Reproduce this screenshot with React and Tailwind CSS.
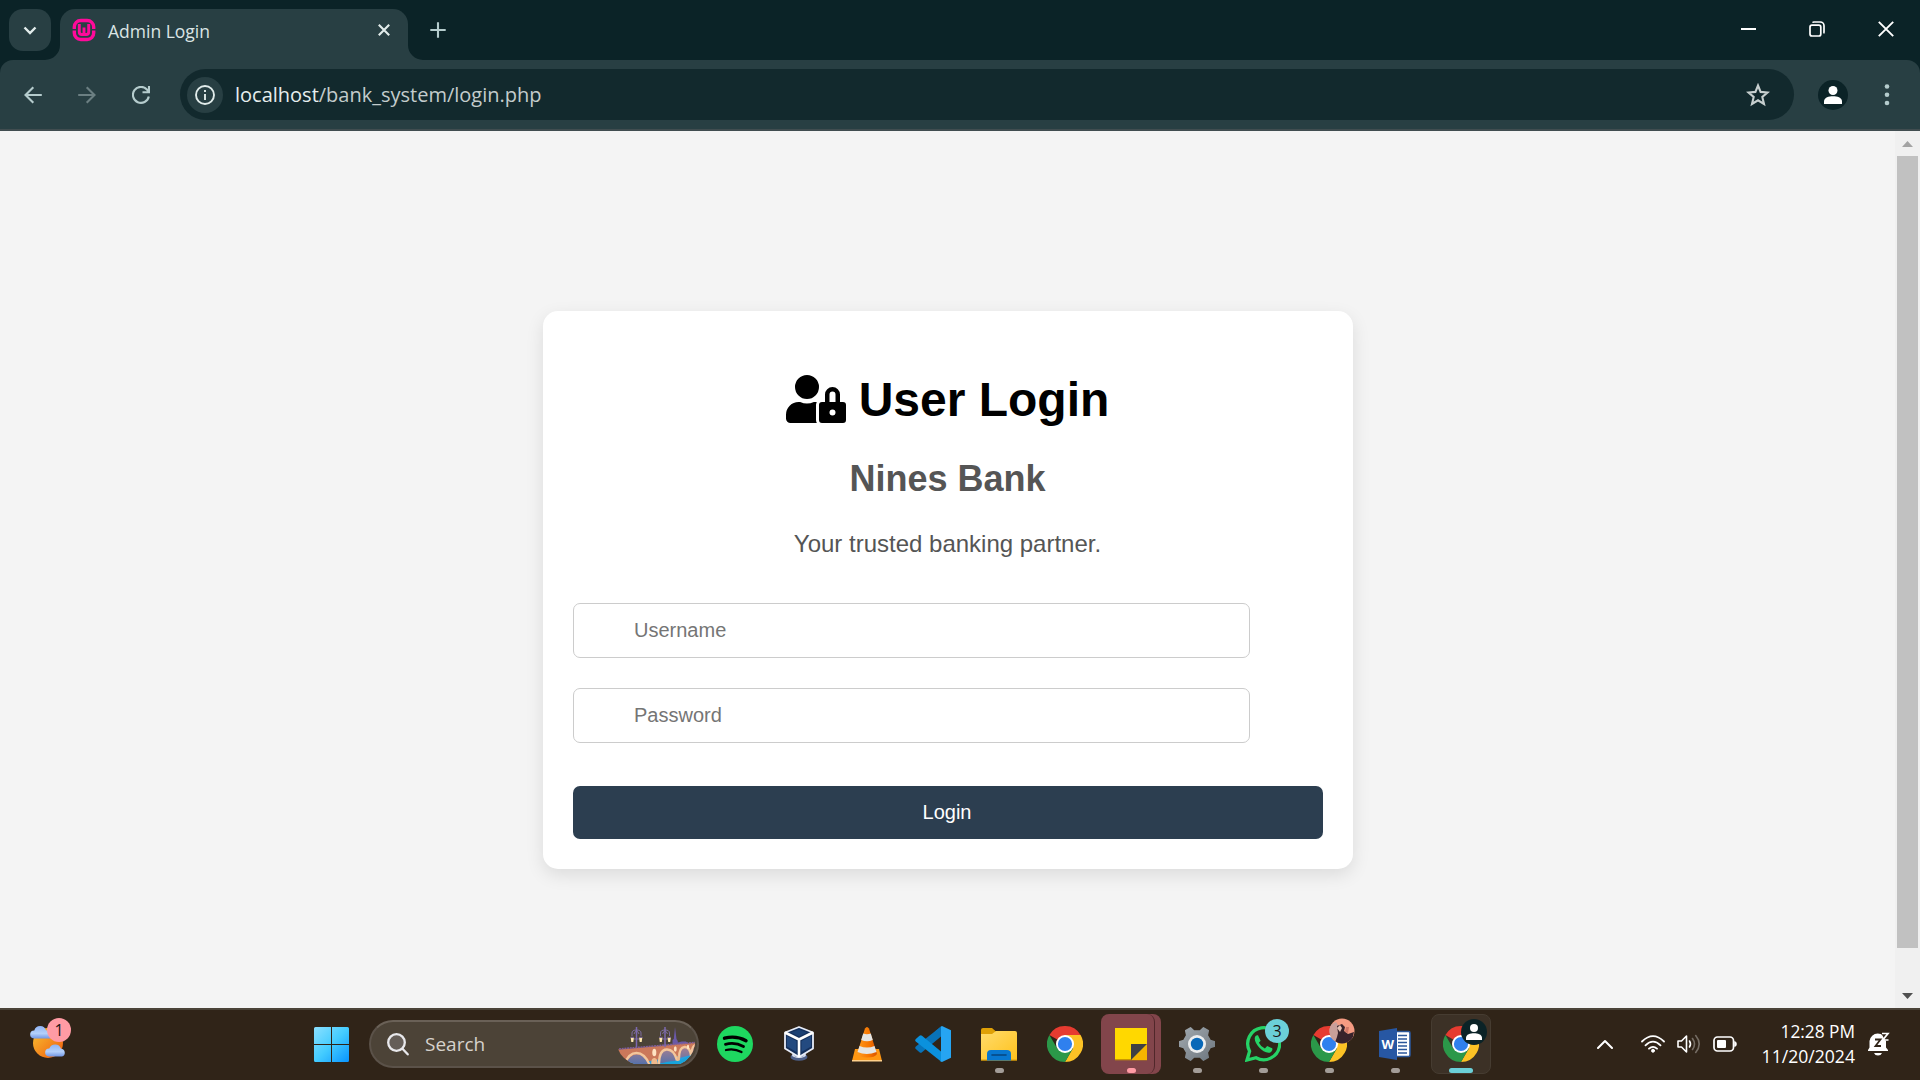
import React from "react";
import { FaUserLock } from "react-icons/fa";

const UI = "font-['Open_Sans','Noto_Sans',sans-serif]";

function Chevron({ up, className }) {
  return (
    <svg viewBox="0 0 16 10" className={className} fill="none" stroke="currentColor" strokeWidth="2" strokeLinecap="round" strokeLinejoin="round">
      <path d={up ? "M1 9 8 2l7 7" : "M2 2l6 6 6-6"} />
    </svg>
  );
}

function WampIcon() {
  return (
    <svg viewBox="0 0 24 24" className="h-6 w-6 shrink-0" fill="none" stroke="#ff0a9a">
      <path d="M2.300 11V9a6.500 6.500 0 0 1 6.500-6.500h6.400A6.500 6.500 0 0 1 21.700 9v2M2.300 12.600v2.400a6.500 6.500 0 0 0 6.500 6.500h6.400a6.500 6.500 0 0 0 6.500-6.500v-2.400" strokeWidth="3.400" />
      <path d="M7.300 6v8q0 2.500 2.500 2.500h4.400q2.500 0 2.500-2.500V6M12 9.500v6.500" strokeWidth="2.900" />
    </svg>
  );
}

function TabStrip() {
  return (
    <div className="flex h-[60px] shrink-0 items-start bg-[#0b2327] text-white">
      <button className="ml-[9px] mt-[9px] flex h-[42px] w-[42px] items-center justify-center rounded-[14px] bg-[#283f43] text-[#e2eceb]">
        <svg viewBox="0 0 14 9" className="h-[9px] w-[14px]" fill="none" stroke="currentColor" strokeWidth="2.400"><path d="M1.500 1.500 7 7l5.500-5.500" /></svg>
      </button>
      <div className="relative ml-[9px] mt-[9px] flex h-[51px] w-[348px] rounded-t-[15px] bg-[#283f43] pl-3">
        <svg viewBox="0 0 15 15" className="absolute -left-[15px] bottom-0 h-[15px] w-[15px]"><path d="M15 0v15H0A15 15 0 0 0 15 0Z" fill="#283f43" /></svg>
        <svg viewBox="0 0 15 15" className="absolute -right-[15px] bottom-0 h-[15px] w-[15px]"><path d="M0 0v15h15A15 15 0 0 1 0 0Z" fill="#283f43" /></svg>
        <div className="mt-[9px] flex h-6 items-center"><WampIcon /></div>
        <span className="ml-3 mt-[10px] text-[17.5px] leading-6 whitespace-nowrap text-[#dbe5e5]">Admin Login</span>
        <svg viewBox="0 0 12 12" className="absolute left-[318px] top-[15px] h-3 w-3" fill="none" stroke="#e2eceb" strokeWidth="2.100"><path d="M.8.8l10.400 10.400M11.200.8.8 11.200" /></svg>
      </div>
      <svg viewBox="0 0 16 16" className="ml-[22px] mt-[22px] h-4 w-4" fill="none" stroke="#b5cccd" strokeWidth="2.100"><path d="M8 .3v15.400M.3 8h15.400" /></svg>
      <div className="ml-auto flex h-[58px] items-center">
        <div className="flex w-[68px] justify-center pl-[1px]"><svg viewBox="0 0 16 16" className="h-4 w-4"><path d="M0 7h15v2H0z" fill="#fff" /></svg></div>
        <div className="flex w-[69px] justify-center">
          <svg viewBox="0 0 16 16" className="h-4 w-4" fill="none" stroke="#fff" strokeWidth="1.700"><rect x="1" y="4.200" width="10.800" height="10.800" rx="2" /><path d="M3.800 1.800Q4 1 5 1h6.300A3.700 3.700 0 0 1 15 4.700V11q0 .9-.5 1.200" /></svg>
        </div>
        <div className="flex w-[69px] justify-center"><svg viewBox="0 0 16 16" className="h-4 w-4" fill="none" stroke="#fff" strokeWidth="1.900"><path d="m.8.8 14.400 14.400M15.200.8.8 15.200" /></svg></div>
      </div>
    </div>
  );
}

function Toolbar() {
  return (
    <div className="h-[71px] shrink-0 bg-[#0b2327]">
      <div className="flex h-[71px] items-start rounded-t-[13px] border-b-2 border-[#414d50] bg-[#283f43]">
        <div className="flex h-[69px] w-[180px] shrink-0 items-center pl-6">
          <svg viewBox="0 0 18 18" className="h-[18px] w-[18px]" fill="none" stroke="#b5cccd" strokeWidth="2.100"><path d="M17.800 9H2M9.300 1.200 1.500 9l7.800 7.800" /></svg>
          <svg viewBox="0 0 18 18" className="ml-9 h-[18px] w-[18px]" fill="none" stroke="#6b7f82" strokeWidth="2.100"><path d="M.2 9H16M8.700 1.200 16.500 9l-7.800 7.800" /></svg>
          <svg viewBox="0 0 18 18" className="ml-9 h-[18px] w-[18px]" fill="none" stroke="#b5cccd" strokeWidth="2.100"><path d="M16.800 10.500A8 8 0 1 1 14.900 3.500L16.700 5.600M17 0v6.200h-6.500" /></svg>
        </div>
        <div className="mt-[9px] flex h-[51px] w-[1614px] items-center rounded-full bg-[#12292d] pl-[7px]">
          <div className="flex h-9 w-9 items-center justify-center rounded-full bg-[#283f43]">
            <svg viewBox="0 0 20 20" className="h-5 w-5" fill="none" stroke="#e2eceb" strokeWidth="1.900"><circle cx="10" cy="10" r="9" /><path d="M10 9v6M10 5v2" /></svg>
          </div>
          <span className="ml-[12px] text-[20px] leading-6 whitespace-nowrap text-[#c3cccc]"><span className="text-[#e6eeee]">localhost</span>/bank_system/login.php</span>
          <svg viewBox="0 0 24 24" className="ml-auto mr-[24px] h-6 w-6" fill="none" stroke="#c7cfcf" strokeWidth="2.100"><path d="m12 2.500 2.600 6.400 7 .6-5.300 4.500 1.700 7-6-3.700L6 21l1.700-7-5.300-4.500 7-.6z" /></svg>
        </div>
        <div className="ml-6 mt-5 flex h-[30px] w-[30px] items-center justify-center rounded-full bg-[#0b2327]"><Person className="h-[18px] w-[18px]" /></div>
        <svg viewBox="0 0 6 22" className="ml-9 mt-[24px] h-[22px] w-[6px]" fill="#b5cccd"><circle cx="3" cy="2.500" r="2.300" /><circle cx="3" cy="10.800" r="2.300" /><circle cx="3" cy="19" r="2.300" /></svg>
      </div>
    </div>
  );
}

function Person({ className }) {
  return <svg viewBox="0 0 18 18" className={className} fill="#fff"><circle cx="9" cy="4.500" r="4.500" /><path d="M0 18v-2.500C0 11.500 5 10.300 9 10.300s9 1.200 9 5.200V18z" /></svg>;
}

function LoginPage() {
  return (
    <div className="flex h-[877px] shrink-0 bg-[#f4f4f4] font-['Liberation_Sans',Arial,sans-serif]">
      <main className="flex flex-1 justify-center pt-[180px]">
        <form className="ml-[1px] h-[558px] w-[810px] rounded-[15px] bg-white px-[30px] pt-[61px] shadow-[0_6px_18px_rgba(0,0,0,0.1)]">
          <h1 className="mr-[1px] flex justify-center gap-[13px] text-[48px] font-bold leading-[55px] text-black">
            <FaUserLock className="mt-[3px] h-12 w-[60px]" />User Login
          </h1>
          <h2 className="mr-[1px] mt-[31px] text-center text-[36px] font-bold leading-[41px] text-[#555]">Nines Bank</h2>
          <p className="mr-[1px] mt-[31px] text-center text-[24px] leading-[27px] text-[#555]">Your trusted banking partner.</p>
          <input placeholder="Username" className="mt-[46px] block h-[55px] w-[677px] rounded-[7px] border border-[#ccc] pl-[60px] text-[20px] placeholder:text-[#757575]" />
          <input placeholder="Password" type="password" className="mt-[30px] block h-[55px] w-[677px] rounded-[7px] border border-[#ccc] pl-[60px] text-[20px] placeholder:text-[#757575]" />
          <button type="button" className="mt-[43px] block h-[53px] w-[750px] rounded-[7px] bg-[#2c3e50] pb-[2px] pr-[2px] text-[20px] text-white">Login</button>
        </form>
      </main>
      <div className="flex w-[25px] flex-col items-center bg-[#f0f0f0]">
        <svg viewBox="0 0 11 6" className="mt-[10px] h-[6px] w-[11px]"><path d="M0 6 5.500 0 11 6z" fill="#a3a3a3" /></svg>
        <div className="mt-[9px] h-[792px] w-[21px] bg-[#c1c1c1]" />
        <svg viewBox="0 0 11 6" className="mt-[45px] h-[6px] w-[11px]"><path d="M0 0h11L5.500 6z" fill="#505050" /></svg>
      </div>
    </div>
  );
}

function WeatherIcon() {
  return (
    <svg viewBox="0 0 36 34" className="h-[34px] w-9">
      <defs>
        <linearGradient id="sun" x1="0" y1="0" x2="1" y2="1"><stop offset="0.1" stopColor="#f7b82f" /><stop offset="1" stopColor="#f05a0c" /></linearGradient>
        <linearGradient id="cloud" x1="0" y1="0" x2="0" y2="1"><stop offset="0" stopColor="#8fb3f3" /><stop offset=".6" stopColor="#b3d0fb" /><stop offset="1" stopColor="#7196e4" /></linearGradient>
      </defs>
      <circle cx="18" cy="18" r="15" fill="url(#sun)" />
      <path d="M4 13.500a4 4 0 0 1 .3-8A6 6 0 0 1 16 5.600a4 4 0 0 1 4 7.900z" fill="url(#cloud)" />
      <path d="M19 31.500a4 4 0 0 1 .3-8A6.200 6.200 0 0 1 31 23.700a4 4 0 0 1 1 7.800z" fill="url(#cloud)" />
    </svg>
  );
}

function WindowsIcon() {
  return (
    <svg viewBox="0 0 35 35" className="h-[35px] w-[35px]">
      <defs><linearGradient id="win" gradientUnits="userSpaceOnUse" x1="0" y1="0" x2="35" y2="35"><stop offset="0" stopColor="#8be0ff" /><stop offset=".5" stopColor="#44ccff" /><stop offset="1" stopColor="#0894ff" /></linearGradient></defs>
      <path fill="url(#win)" d="M1.500 0H17v17H0V1.500Q0 0 1.500 0ZM18 0h15.500Q35 0 35 1.500V17H18ZM0 18h17v17H1.500Q0 35 0 33.500ZM18 18h17v15.500q0 1.500-1.500 1.500H18Z" />
    </svg>
  );
}

function Lamp({ x }) {
  return (
    <g transform={`translate(${x} 0)`}>
      <path d="M0 0v20" stroke="#7b68b0" strokeWidth="1.500" />
      <path d="M-4.500 9V6q0-3 4.500-3t4.500 3v3M-2.500 7Q0 1 2.500 7M-4 12h8" fill="none" stroke="#8272ac" strokeWidth=".9" />
      <path d="M-5.800 10.500h3.200l-.6 4.500h-2zM2.600 10.500h3.200l-.6 4.500h-2z" fill="#ffe9ae" />
      <path d="M-6 10.300h3.600M2.400 10.300H6" stroke="#75609c" strokeWidth="1" />
    </g>
  );
}

function BridgeArt() {
  return (
    <svg viewBox="0 0 77 38" className="h-[38px] w-[77px]">
      <defs>
        <clipPath id="bridgeClip"><path d="M0 0h77v17Q75 31 62 37H17Q4 33 0 22z" /></clipPath>
        <linearGradient id="arch" x1="0" y1="0" x2="0" y2="1"><stop offset="0" stopColor="#b0808c" /><stop offset="1" stopColor="#4d70ae" /></linearGradient>
      </defs>
      <g clipPath="url(#bridgeClip)">
        <path d="M54.500 19v-6l1.300-1L57 0l1.500 12 1.300 2v1.500l4-1h4l1.500 1V19z" fill="#6a59a8" />
        <path d="M0 22.500 40 19l37-3.500V38H0z" fill="#cb785a" />
        <path d="M12 34h20l45-8v12H12z" fill="#2b9fe0" />
        <path d="M7 39Q11 27.500 19 27.500T31.500 39zM41.500 36q0-12.500 7.500-13t9.500 9.500L55 36zM61.500 31q0-9.500 5-10t6.500 7zM74 26q0-7.500 4-7.500v8z" fill="url(#arch)" />
        <path d="M6 39Q10 26 18.500 26T32 39M41 37q0-14 7.500-14.500T59 33.500M61 31.500q0-11 5.500-11.500t6.500 9M73.500 27q.5-9 4.500-9" fill="none" stroke="#f3c69c" strokeWidth="2.300" />
        <path d="M33.500 38q-1-6 2.500-7t4 7zM59 35q-.5-6 1.200-6.500T62 34z" fill="#efba8d" />
        <ellipse cx="36.300" cy="25.500" rx="2" ry="3.800" fill="#ffe3c3" /><ellipse cx="57.300" cy="22" rx="1.400" ry="2.800" fill="#ffe3c3" /><ellipse cx="70" cy="20" rx="1.100" ry="2.200" fill="#ffe3c3" />
        <path d="M1 22 40 18.700l37-3.200" fill="none" stroke="#7f5f9a" strokeWidth="1.600" strokeDasharray="2 .7" />
        <path d="M42 37q8-3.500 18-3l14-6v10H42z" fill="#18a4dc" />
      </g>
      <Lamp x={18.500} />
      <Lamp x={47} />
    </svg>
  );
}

function Spotify() {
  return (
    <svg viewBox="0 0 36 36" className="h-9 w-9" fill="none" stroke="#000" strokeLinecap="round">
      <circle cx="18" cy="18" r="18" fill="#1ed760" stroke="none" />
      <path d="M7.500 12.200q11.500-3 21.500 2.500" strokeWidth="3.400" /><path d="M8.500 18.300q9.500-2.500 18 2.200" strokeWidth="2.800" /><path d="M9 24q8-2 15.500 2" strokeWidth="2.300" />
    </svg>
  );
}

function VirtualBox() {
  return (
    <svg viewBox="0 0 36 36" className="h-9 w-9">
      <ellipse cx="18" cy="31" rx="8.500" ry="3.800" fill="#4e6089" /><ellipse cx="18" cy="29" rx="7" ry="3" fill="#dbe1f0" />
      <path d="M12 27h12l-2 4h-8z" fill="#a8b5d2" />
      <path d="M18 1 32 6.500v16L18 31 4 22.500v-16z" fill="#14305c" stroke="#e8edf8" strokeWidth="1.800" strokeLinejoin="round" />
      <path d="m4 6.500 14 7 14-7M18 13.500V31" fill="none" stroke="#fff" strokeWidth="2.600" />
      <path d="m6 10 9.500 5v11L6 20.500zM30 10l-9.500 5v11l9.500-5.500z" fill="#234a80" />
      <path d="m10 6.500 8-3 8 3-8 4z" fill="#1b4073" />
    </svg>
  );
}

function Vlc() {
  return (
    <svg viewBox="0 0 36 36" className="h-9 w-9">
      <defs><linearGradient id="cone"><stop offset="0" stopColor="#ff9c20" /><stop offset=".6" stopColor="#f77600" /><stop offset="1" stopColor="#d85200" /></linearGradient></defs>
      <path d="M6 23h24l3 12H3z" fill="#ff9712" /><path d="M3 34h30v1.500H3z" fill="#ffd08a" />
      <path d="M16 2.500q2-3 4 0L28 28q-2 3.500-10 3.500T8 28z" fill="url(#cone)" />
      <path d="m14.200 7.500-2 6.500q6 2.500 11.600 0l-2-6.500q-4 1.500-7.600 0ZM10.500 20l-2 6q9 4 19 0l-2-6q-7.500 3-15 0Z" fill="#e5e5e3" />
    </svg>
  );
}

function VsCode() {
  return (
    <svg viewBox="0 0 36 36" className="h-9 w-9">
      <path d="M26 .5v10L7 26.300q-1.300 1-2.500 0L.8 23q-1.200-1.300 0-2.600z" fill="#0873b9" />
      <path d="M26 35.500v-10L7 9.700q-1.300-1-2.500 0L.8 13q-1.200 1.300 0 2.600z" fill="#0b91dd" />
      <path d="M26 .5 27 0l9 4.200v27.600L27 36l-1.500-.5 .5-1.300z" fill="#26a5f2" />
      <path d="M20 5.500 26 .5V10z" fill="#0873b9" />
    </svg>
  );
}

function Folder() {
  return (
    <svg viewBox="0 0 36 36" className="h-9 w-9">
      <defs><linearGradient id="fold" x1="0" y1="0" x2="1" y2="1"><stop offset="0" stopColor="#ffdb6c" /><stop offset="1" stopColor="#ffc21c" /></linearGradient></defs>
      <path d="M0 4q0-2 2-2h9l4 3.500V12H0z" fill="#dfa006" />
      <path d="M0 8h11l4-3h19q2 0 2 2v27H0z" fill="url(#fold)" /><path d="M0 33.500h36v1.200H0z" fill="#d79c0b" />
      <path d="M6 34.500V28q0-4 4-4h16q4 0 4 4v6.500z" fill="#0877cf" /><path d="M11 29h14" stroke="#06467f" strokeWidth="1.600" strokeLinecap="round" />
    </svg>
  );
}

function Chrome() {
  return (
    <svg viewBox="0 0 36 36" className="h-9 w-9">
      <path d="M18 18 2.410 9A18 18 0 0 1 33.590 9z" fill="#e63b30" />
      <path d="M18 9h15.590A18 18 0 0 1 18 36l7.790-13.500z" fill="#fcc225" />
      <path d="M25.790 22.500 18 36A18 18 0 0 1 2.410 9l7.800 13.500z" fill="#2b9849" />
      <circle cx="18" cy="18" r="9" fill="#fff" /><circle cx="18" cy="18" r="7.100" fill="#2f80ee" />
    </svg>
  );
}

function Sticky() {
  return (
    <svg viewBox="0 0 36 36" className="h-9 w-9">
      <path d="M2 2h32v32H2z" fill="#ffd800" /><path d="M2 33h32v1.300H2z" fill="#c99700" />
      <path d="M34 18v16H18z" fill="#f5b400" /><path d="M18 18h16L18 34z" fill="#3f3f43" />
    </svg>
  );
}

function Gear() {
  return (
    <svg viewBox="0 0 36 36" className="h-9 w-9">
      <defs><linearGradient id="gear" x1="0" y1="0" x2="1" y2="1"><stop offset="0" stopColor="#a0a8ae" /><stop offset="1" stopColor="#6e777f" /></linearGradient></defs>
      <path fill="url(#gear)" stroke="url(#gear)" strokeWidth="1.500" strokeLinejoin="round" d="M11.500 1.800 15 5h6l3.500-3.200 4.800 2.800-1 4.700 3 5.200 4.100 1.300v4.400l-4.100 1.300-3 5.200 1 4.700-4.800 2.800L21 31h-6l-3.500 3.200-4.800-2.800 1-4.700-3-5.200L.6 20.200v-4.400l4.100-1.300 3-5.200-1-4.700z" />
      <circle cx="18" cy="18" r="9" fill="#eceeef" /><circle cx="18" cy="18" r="6.200" fill="#0868b8" />
    </svg>
  );
}

function WhatsApp() {
  return (
    <svg viewBox="0 0 36 36" className="h-9 w-9">
      <path d="M2 34 4.600 25.200A16 16 0 1 1 11 31.700z" fill="none" stroke="#25d366" strokeWidth="3.300" />
      <path d="M13 9.300q-1.300-.5-2.500.7c-3.500 4.500 5.500 16.500 13 16.800 3 0 4.500-3 3.700-4.500l-5-2.300-2.300 2.500q-3.800-1.500-6-5.800l1.700-2z" fill="#25d366" />
    </svg>
  );
}

function Word() {
  return (
    <svg viewBox="0 0 36 36" className="h-9 w-9">
      <rect x="17" y="5.500" width="16" height="25" rx="1.500" fill="#fff" stroke="#2b579a" strokeWidth="1.600" />
      <path d="M21 9.500h9M21 13h9M21 16.500h9M21 20h9M21 23.500h9M21 27h9" stroke="#2b579a" strokeWidth="1.500" />
      <path d="m2 5 18-3v32L2 31z" fill="#2757a3" />
      <text x="10.800" y="22.500" textAnchor="middle" fill="#fff" className="font-['Open_Sans',sans-serif] text-[13px] font-bold">W</text>
    </svg>
  );
}

function Badge({ children, className }) {
  return <div className={`absolute flex h-6 w-6 items-center justify-center rounded-full text-[16px] leading-none text-[#1b1512] ${className}`}>{children}</div>;
}

function TaskbarApp({ children, dot, className = "" }) {
  return (
    <div className="relative flex w-[66px] shrink-0 items-center justify-center">
      <div className={`relative flex h-[60px] w-[60px] items-center justify-center rounded-lg ${className}`}>
        {children}
        {dot && <span className="absolute bottom-[1px] left-[26px] h-[5px] w-[9px] rounded-full bg-[#a39d98]" />}
      </div>
    </div>
  );
}

function PhotoBadge() {
  return (
    <svg viewBox="0 0 26 26" className="absolute left-[30px] top-[4px] h-[26px] w-[26px]">
      <defs><clipPath id="face"><circle cx="13" cy="13" r="12.500" /></clipPath></defs>
      <g clipPath="url(#face)">
        <path d="M0 0h26v26H0z" fill="#f59b82" /><path d="M0 8 7 4l4 6-3 16H0z" fill="#c9a09a" />
        <path d="m8 8 5-2 3 3-1 4 4 3 6-2-2 9-8 4H5l3-8 1-4z" fill="#38232b" /><path d="m8 10 3-3 2 3-2 4z" fill="#e8c3b5" /><path d="M17 9h3l-1 6-3-1z" fill="#cf7767" />
      </g>
    </svg>
  );
}

function Taskbar() {
  return (
    <footer className="flex h-[72px] shrink-0 border-t-2 border-[#4b4339] bg-[#302418] pb-[2px]">
      <div className="relative ml-[30px] flex w-[284px] items-center">
        <div className="-mt-[4px]"><WeatherIcon /></div>
        <Badge className="left-[17px] top-[8px] bg-[#ff9ba4]">1</Badge>
      </div>
      <div className="flex w-[55px] items-center"><WindowsIcon /></div>
      <div className="mt-[10px] flex h-12 w-[330px] items-center rounded-full border-2 border-[#5b5249] border-t-[#6a6157] bg-[#4c4337] pl-4">
        <svg viewBox="0 0 22 23" className="h-[23px] w-[22px]" fill="none" stroke="#e9e9ec" strokeWidth="2.300" strokeLinecap="round"><circle cx="9.500" cy="9.500" r="8.300" fill="#655e58" /><path d="m15.700 16 5 5.300" /></svg>
        <span className="ml-4 text-[19px] leading-6 text-[#d6d2cc]">Search</span>
        <div className="ml-auto mr-[2px] pt-[4px]"><BridgeArt /></div>
      </div>
      <div className="ml-[3px] flex">
        <TaskbarApp><Spotify /></TaskbarApp>
        <TaskbarApp><div className="mr-[5px]"><VirtualBox /></div></TaskbarApp>
        <TaskbarApp><Vlc /></TaskbarApp>
        <TaskbarApp><VsCode /></TaskbarApp>
        <TaskbarApp dot><Folder /></TaskbarApp>
        <TaskbarApp><Chrome /></TaskbarApp>
        <div className="relative flex w-[66px] items-center pl-[3px]">
          <div className="flex h-[60px] w-[60px] rounded-lg bg-[#82454b]">
            <div className="relative flex h-[60px] w-[54px] items-center justify-center rounded-lg border-r border-[#50272a] pl-[6px]">
              <Sticky />
              <span className="absolute bottom-[1px] left-[26px] h-[5px] w-[9px] rounded-full bg-[#ff9ba4]" />
            </div>
          </div>
        </div>
        <TaskbarApp dot><Gear /></TaskbarApp>
        <TaskbarApp dot><WhatsApp /><Badge className="left-[32px] top-[5px] bg-[#6bd0d8]">3</Badge></TaskbarApp>
        <TaskbarApp dot><Chrome /><PhotoBadge /></TaskbarApp>
        <TaskbarApp dot><Word /></TaskbarApp>
        <TaskbarApp className="border border-[#463c31] bg-[#3c3126]">
          <Chrome />
          <div className="absolute left-[29px] top-[4px] flex h-[26px] w-[26px] items-center justify-center rounded-full bg-[#0b2327]"><Person className="h-4 w-4" /></div>
          <span className="absolute bottom-0 left-[17px] h-[5px] w-6 rounded-full bg-[#6bd0d8]" />
        </TaskbarApp>
      </div>
      <div className="ml-auto flex items-center text-white">
        <Chevron up className="h-[10px] w-4" />
        <svg viewBox="0 0 24 18" className="ml-7 h-[18px] w-6" fill="none" stroke="#fff" strokeWidth="1.800" strokeLinecap="round"><path d="M1 6.500q11-10.800 22 0M4.500 10.300q7.500-7.300 15 0M8 13.700q4-3.700 8 0" /><circle cx="12" cy="15.700" r="1.500" fill="#fff" strokeWidth="1" /></svg>
        <svg viewBox="0 0 24 20" className="ml-3 h-5 w-6" fill="none" stroke="#fff" strokeWidth="1.600" strokeLinecap="round" strokeLinejoin="round"><path d="M1 7h3.500L9.500 2v16L4.500 13H1zM12.500 7q2 3 0 6" /><path d="M15.500 4.500q4 5.500 0 11M18.700 1.500q7 8.500 0 17" stroke="#756d64" /></svg>
        <svg viewBox="0 0 24 16" className="ml-3 h-4 w-6" fill="none" stroke="#fff" strokeWidth="1.700"><rect x="1" y="1" width="19.500" height="14" rx="3.500" /><rect x="4" y="4" width="9" height="8" rx="1" fill="#fff" stroke="none" /><path d="M21.500 5.500q2 0 2 2.500t-2 2.500z" fill="#fff" strokeWidth=".6" /></svg>
        <div className="flex w-[118px] flex-col items-end text-[17.300px] leading-6 whitespace-nowrap">
          <span>12:28 PM</span>
          <span className="text-[17.600px]">11/20/2024</span>
        </div>
        <svg viewBox="0 0 22 24" className="ml-[13px] mr-[30px] h-6 w-[22px]">
          <path d="M1.500 15.500V9a8.300 8.300 0 0 1 16.500 0v6.500l2 2.500v1H0v-1zM6 21h8q-1 2.500-4 2.500T6 21Z" fill="#fff" />
          <path d="M12.500-.5h10v9H17z" fill="#302418" />
          <path d="M14 1.500h6L14.800 8H20.500" fill="none" stroke="#fff" strokeWidth="1.700" />
          <path d="M7 7.500h5.500L7.500 14H13" fill="none" stroke="#302418" strokeWidth="1.800" />
        </svg>
      </div>
    </footer>
  );
}

export default function App() {
  return (
    <div className={`flex h-[1080px] w-[1920px] flex-col overflow-hidden ${UI}`}>
      <TabStrip />
      <Toolbar />
      <LoginPage />
      <Taskbar />
    </div>
  );
}
